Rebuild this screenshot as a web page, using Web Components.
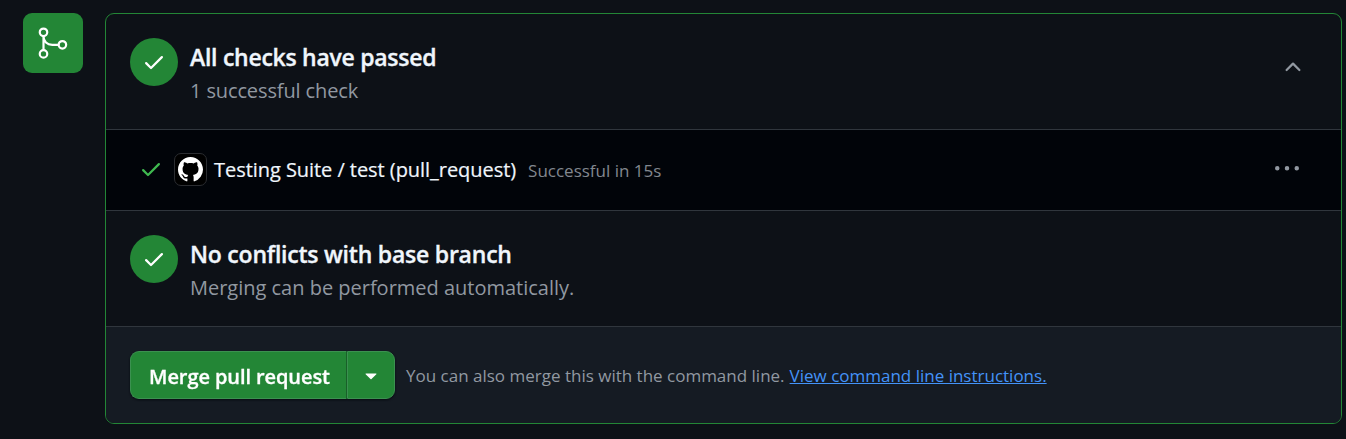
<!DOCTYPE html>
<html lang="en">
<head>
<meta charset="utf-8">
<title>Merge status</title>
<style>
html, body { margin: 0; height: 100%; background: #0d1117; }
body { font-family: "Open Sans", "Noto Sans", sans-serif; color: #f0f6fc; overflow: hidden; }
</style>
</head>
<body>
<merge-panel>
  <status-section slot="sections" collapsible style="--title-spacing:-0.27px; --sub-spacing:-0.12px">
    <span slot="title">All checks have passed</span>
    <span slot="sub">1 successful check</span>
  </status-section>
  <check-row slot="sections">
    <span slot="name">Testing Suite / test (pull_request)</span>
    <span slot="detail">Successful in 15s</span>
  </check-row>
  <status-section slot="sections" style="--title-spacing:-0.22px; --sub-spacing:-0.01px">
    <span slot="title">No conflicts with base branch</span>
    <span slot="sub">Merging can be performed automatically.</span>
  </status-section>
  <merge-footer slot="sections">
    <split-button slot="action">Merge pull request</split-button>
    <span slot="note">You can also merge this with the command line.</span>
    <span slot="link">View command line instructions.</span>
  </merge-footer>
</merge-panel>
<script>
const ICONS = {
  check: '<path d="M13.78 4.22a.75.75 0 0 1 0 1.06l-7.25 7.25a.75.75 0 0 1-1.06 0L2.22 9.28a.751.751 0 0 1 .018-1.042.751.751 0 0 1 1.042-.018L6 10.94l6.72-6.72a.75.75 0 0 1 1.06 0Z"/>',
  chevron: '<path d="M3.22 10.53a.749.749 0 0 1 0-1.06l4.25-4.25a.749.749 0 0 1 1.06 0l4.25 4.25a.749.749 0 1 1-1.06 1.06L8 6.811 4.28 10.53a.749.749 0 0 1-1.06 0Z"/>',
  kebab: '<path d="M8 9a1.5 1.5 0 1 0 0-3 1.5 1.5 0 0 0 0 3ZM1.5 9a1.5 1.5 0 1 0 0-3 1.5 1.5 0 0 0 0 3Zm13 0a1.5 1.5 0 1 0 0-3 1.5 1.5 0 0 0 0 3Z"/>',
  triangle: '<path d="m4.427 7.427 3.396 3.396a.25.25 0 0 0 .354 0l3.396-3.396A.25.25 0 0 0 11.396 7H4.604a.25.25 0 0 0-.177.427Z"/>',
  github: '<path d="M8 0C3.58 0 0 3.58 0 8c0 3.54 2.29 6.53 5.47 7.59.4.07.55-.17.55-.38 0-.19-.01-.82-.01-1.49-2.01.37-2.53-.49-2.69-.94-.09-.23-.48-.94-.82-1.13-.28-.15-.68-.52-.01-.53.63-.01 1.08.58 1.23.82.72 1.21 1.87.87 2.33.66.07-.52.28-.87.51-1.07-1.78-.2-3.64-.89-3.64-3.95 0-.87.31-1.59.82-2.15-.08-.2-.36-1.02.08-2.12 0 0 .67-.21 2.2.82.64-.18 1.32-.27 2-.27s1.36.09 2 .27c1.53-1.04 2.2-.82 2.2-.82.44 1.1.16 1.92.08 2.12.51.56.82 1.27.82 2.15 0 3.07-1.87 3.75-3.65 3.95.29.25.54.73.54 1.48 0 1.07-.01 1.93-.01 2.2 0 .21.15.46.55.38A8.01 8.01 0 0 0 16 8c0-4.42-3.58-8-8-8Z"/>'
};

class UiIcon extends HTMLElement {
  connectedCallback() {
    const size = this.getAttribute('size') || 24;
    this.attachShadow({ mode: 'open' }).innerHTML = `
      <style>:host{display:block;flex:none;line-height:0} svg{display:block;fill:currentColor}</style>
      <svg width="${size}" height="${size}" viewBox="0 0 16 16">${ICONS[this.getAttribute('name')]}</svg>`;
  }
}

class MergeBadge extends HTMLElement {
  connectedCallback() {
    this.attachShadow({ mode: 'open' }).innerHTML = `
      <style>
        :host{display:flex;align-items:center;justify-content:center;flex:none;width:60px;height:60px;border-radius:9px;background:#238636}
        svg{fill:none;stroke:#fff;stroke-width:2.2;stroke-linecap:round}
      </style>
      <svg width="36" height="36" viewBox="0 0 36 36">
        <circle cx="8.5" cy="7.3" r="3.75"/><circle cx="8.5" cy="28.9" r="3.75"/><circle cx="27.4" cy="19.8" r="3.75"/>
        <path d="M8.5 11.2V25M8.5 11.2c0 5.2 3.6 8.6 8.8 8.6h6.2"/>
      </svg>`;
  }
}

class MergePanel extends HTMLElement {
  connectedCallback() {
    this.attachShadow({ mode: 'open' }).innerHTML = `
      <style>
        :host{display:flex;align-items:flex-start;gap:22px;padding:13px 4px 15px 23px}
        .box{flex:1;display:flex;flex-direction:column;border:1px solid #238636;border-radius:9px;overflow:hidden}
      </style>
      <merge-badge></merge-badge><div class="box"><slot name="sections"></slot></div>`;
  }
}

class StatusSection extends HTMLElement {
  connectedCallback() {
    this.attachShadow({ mode: 'open' }).innerHTML = `
      <style>
        :host{display:flex;gap:12px;height:116px;box-sizing:border-box;padding:24px 36px 0 24px;border-bottom:1px solid #30363d}
        .disc{display:flex;align-items:center;justify-content:center;flex:none;width:48px;height:48px;border-radius:50%;background:#238636;color:#fff}
        .text{flex:1;padding-top:4px;display:flex;flex-direction:column;gap:3px;white-space:nowrap}
        .title{font-size:23px;font-weight:600;line-height:30px;letter-spacing:var(--title-spacing);-webkit-text-stroke:.35px currentColor}
        .sub{font-size:20px;line-height:32px;color:#9198a1;letter-spacing:var(--sub-spacing)}
        .toggle{color:#9198a1;padding-top:17px}
      </style>
      <div class="disc"><ui-icon name="check"></ui-icon></div>
      <div class="text"><div class="title"><slot name="title"></slot></div><div class="sub"><slot name="sub"></slot></div></div>
      ${this.hasAttribute('collapsible') ? '<ui-icon class="toggle" name="chevron"></ui-icon>' : ''}`;
  }
}

class CheckRow extends HTMLElement {
  connectedCallback() {
    this.attachShadow({ mode: 'open' }).innerHTML = `
      <style>
        :host{display:flex;align-items:center;height:81px;box-sizing:border-box;padding:0 42px 2px 33px;background:#010409;border-bottom:1px solid #30363d;white-space:nowrap}
        .ok{color:#3fb950}
        .avatar{display:flex;align-items:center;justify-content:center;flex:none;width:33px;height:33px;box-sizing:border-box;margin:0 7px 0 11px;border:1px solid #2b2d31;border-radius:7px;background:#000;color:#fff}
        .name{padding-top:2px;font-size:20px;line-height:30px;letter-spacing:-.05px;-webkit-text-stroke:.2px currentColor}
        .detail{flex:1;margin-left:12px;padding-top:4px;font-size:17px;line-height:26px;color:#81878f}
        .more{color:#9198a1}
      </style>
      <ui-icon class="ok" name="check"></ui-icon>
      <div class="avatar"><ui-icon name="github" size="25"></ui-icon></div>
      <div class="name"><slot name="name"></slot></div>
      <div class="detail"><slot name="detail"></slot></div>
      <ui-icon class="more" name="kebab"></ui-icon>`;
  }
}

class SplitButton extends HTMLElement {
  connectedCallback() {
    this.attachShadow({ mode: 'open' }).innerHTML = `
      <style>
        :host{display:flex;flex:none;width:265px;height:48px;border-radius:9px;filter:drop-shadow(0 1px 1px rgba(1,4,9,.75))}
        .main,.menu{display:flex;align-items:center;justify-content:center;box-sizing:border-box;background:#238636;border:1px solid #3b9150;color:#fff}
        .main{flex:1;border-radius:9px 0 0 9px;border-right-color:#196029;font-size:20px;font-weight:600;line-height:30px;letter-spacing:-.086px;white-space:nowrap;padding:3px 0 0 2px;-webkit-text-stroke:.3px currentColor}
        .menu{width:48px;border-radius:0 9px 9px 0}
      </style>
      <div class="main"><slot></slot></div><div class="menu"><ui-icon name="triangle"></ui-icon></div>`;
  }
}

class MergeFooter extends HTMLElement {
  connectedCallback() {
    this.attachShadow({ mode: 'open' }).innerHTML = `
      <style>
        :host{display:flex;align-items:center;height:96px;box-sizing:border-box;padding:0 24px;background:#151b23;white-space:nowrap;font-size:17px;line-height:26px}
        .note{margin-left:11px;padding-top:2px;color:#9198a1}
        .link{margin-left:5px;padding-top:2px;color:#4493f8;text-decoration:underline;text-underline-offset:1px;text-decoration-thickness:1px}
      </style>
      <slot name="action"></slot><div class="note"><slot name="note"></slot></div><div class="link"><slot name="link"></slot></div>`;
  }
}

customElements.define('ui-icon', UiIcon);
customElements.define('merge-badge', MergeBadge);
customElements.define('merge-panel', MergePanel);
customElements.define('status-section', StatusSection);
customElements.define('check-row', CheckRow);
customElements.define('split-button', SplitButton);
customElements.define('merge-footer', MergeFooter);
</script>
</body>
</html>
